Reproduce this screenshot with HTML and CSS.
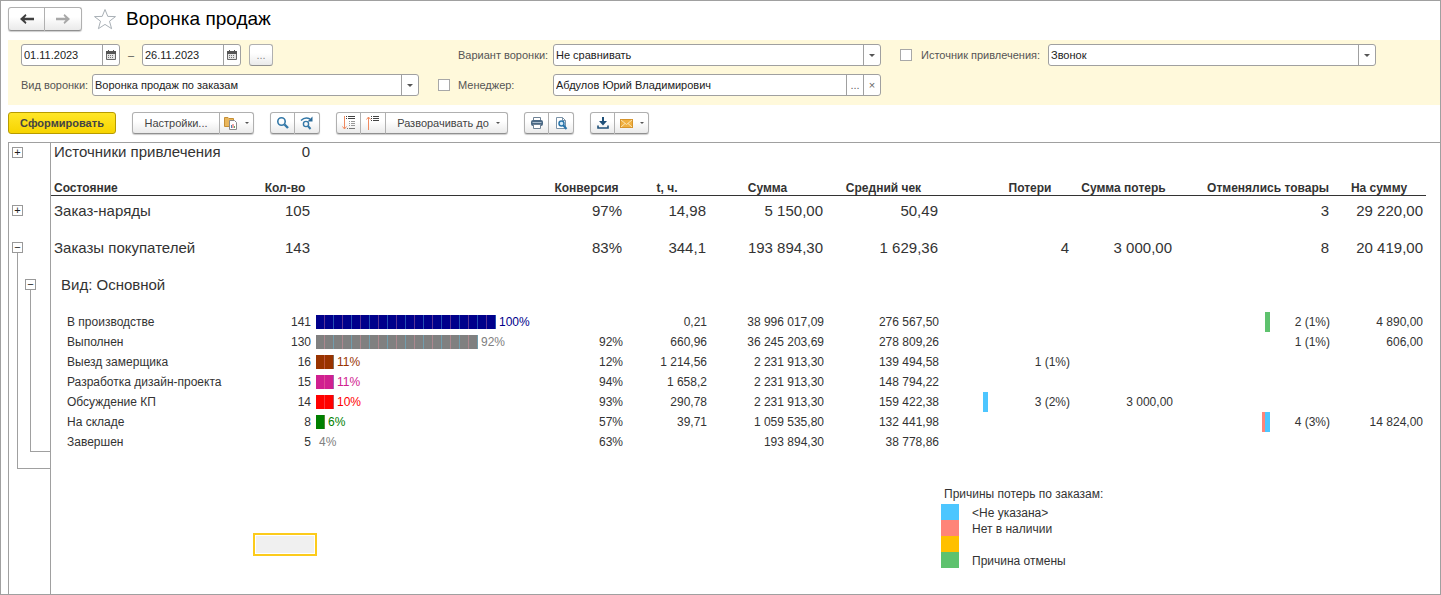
FILE: index.html
```html
<!DOCTYPE html>
<html lang="ru">

<head>
  <meta charset="UTF-8" />
  <meta name="viewport" content="width=device-width, initial-scale=1.0" />
  <title>Воронка продаж</title>
  <link rel="stylesheet" href="styles.css">
</head>

<body>
  <header class="header">
    <div class="btn-group nav">
      <button class="btn" aria-label="Назад">
        <svg width="16" height="12" viewBox="0 0 16 12"><path d="M1 6 6.500 1 7.500 2.500 5.500 4.700H15V7.300H5.500L7.500 9.500 6.500 11Z" fill="#404040"/></svg>
      </button>
      <button class="btn" aria-label="Вперед">
        <svg width="16" height="12" viewBox="0 0 16 12"><path d="M15 6 9.500 1 8.500 2.500 10.500 4.700H1V7.300H10.500L8.500 9.500 9.500 11Z" fill="#a8a8a8"/></svg>
      </button>
    </div>
    <button class="star" aria-label="Добавить в избранное">
      <svg width="24" height="22" viewBox="0 0 24 22"><path d="M12 1.500 14.800 8.400 22.500 8.600 16.500 13.200 18.600 20.700 12 16.400 5.400 20.700 7.500 13.200 1.500 8.600 9.200 8.400Z" fill="#fff" stroke="#a9b0b6"/></svg>
    </button>
    <h1 class="title">Воронка продаж</h1>
  </header>

  <form class="filters">
    <div class="filter-col">
      <div class="period">
        <div class="field date">
          <input type="text" value="01.11.2023" aria-label="Начало периода">
          <button type="button" class="field-btn" aria-label="Выбрать дату начала">
            <svg width="10" height="10" viewBox="0 0 10 10"><path d="M.5 1.500H9.500V9.500H.5Z" fill="#e4e4e4" stroke="#666"/><path d="M0 2.500H10" stroke="#555" stroke-width="3"/><path d="M2.500 0V2M7.500 0V2" stroke="#555"/><path d="M2 5.500H8M2 7.500H8" stroke="#777" stroke-dasharray="1 1"/></svg>
          </button>
        </div>
        <span class="dash">–</span>
        <div class="field date">
          <input type="text" value="26.11.2023" aria-label="Конец периода">
          <button type="button" class="field-btn" aria-label="Выбрать дату окончания">
            <svg width="10" height="10" viewBox="0 0 10 10"><path d="M.5 1.500H9.500V9.500H.5Z" fill="#e4e4e4" stroke="#666"/><path d="M0 2.500H10" stroke="#555" stroke-width="3"/><path d="M2.500 0V2M7.500 0V2" stroke="#555"/><path d="M2 5.500H8M2 7.500H8" stroke="#777" stroke-dasharray="1 1"/></svg>
          </button>
        </div>
        <button type="button" class="btn more" aria-label="Выбрать период">...</button>
      </div>
      <div class="kind">
        <label for="kind">Вид воронки:</label>
        <div class="field">
          <select id="kind"><option>Воронка продаж по заказам</option></select>
          <span class="field-btn"><i class="caret"></i></span>
        </div>
      </div>
    </div>

    <div class="filter-col">
      <div class="param">
        <label class="param-label" for="variant">Вариант воронки:</label>
        <div class="field">
          <select id="variant"><option>Не сравнивать</option></select>
          <span class="field-btn"><i class="caret"></i></span>
        </div>
      </div>
      <div class="param">
        <input type="checkbox" class="check" aria-label="Отбор по менеджеру">
        <label class="param-label" for="manager">Менеджер:</label>
        <div class="field">
          <input type="text" id="manager" value="Абдулов Юрий Владимирович">
          <button type="button" class="field-btn" aria-label="Выбрать менеджера">...</button>
          <button type="button" class="field-btn" aria-label="Очистить">×</button>
        </div>
      </div>
    </div>

    <div class="filter-col">
      <div class="param wide">
        <input type="checkbox" class="check" aria-label="Отбор по источнику">
        <label class="param-label" for="source">Источник привлечения:</label>
        <div class="field">
          <select id="source"><option>Звонок</option></select>
          <span class="field-btn"><i class="caret"></i></span>
        </div>
      </div>
    </div>
  </form>

  <div class="toolbar">
    <button class="btn primary">Сформировать</button>
    <div class="btn-group">
      <button class="btn settings">Настройки...</button>
      <button class="btn menu" aria-label="Варианты отчета">
        <svg width="14" height="14" viewBox="0 0 14 14"><path d="M.5 1.500H4L5 2.500H9.500V10.500H.5Z" fill="#e9b65c" stroke="#c58f35"/><path d="M5.500 4.500H10.500L12.500 6.500V13.500H5.500Z" fill="#fff" stroke="#8a8a8a"/><path d="M7.500 12V9" stroke="#4d86b5"/><path d="M9 12V8" stroke="#d9534f"/><path d="M10.500 12V10" stroke="#62a862"/></svg>
        <i class="caret"></i>
      </button>
    </div>
    <div class="btn-group">
      <button class="btn icon" aria-label="Найти">
        <svg width="14" height="14" viewBox="0 0 14 14" fill="none" stroke="#3579a8"><circle cx="5.500" cy="5.500" r="3.700" stroke-width="1.600"/><path d="M8.500 8.500 12 12" stroke-width="2.400"/></svg>
      </button>
      <button class="btn icon" aria-label="Найти следующее">
        <svg width="14" height="14" viewBox="0 0 14 14" fill="none" stroke="#3579a8"><circle cx="6" cy="8" r="2.600" stroke-width="1.400"/><path d="M8 10 10.500 13" stroke-width="2"/><path d="M1 4.500Q5 .500 10 3" stroke-width="1.600"/><path d="M12.500.5V5.500H7.500Z" fill="#2b6b99" stroke="none"/></svg>
      </button>
    </div>
    <div class="btn-group">
      <button class="btn icon" aria-label="Развернуть группы">
        <svg width="14" height="14" viewBox="0 0 14 14" fill="none"><path d="M2.500 0V13M.5 10.500 2.500 13 4.500 10.500" stroke="#f08a60"/><path d="M4 .5H5M6 .5H13M4 2.500H5M6 2.500H13" stroke="#444"/><path d="M7 5.500H8M9 5.500H13M7 7.500H8M9 7.500H13M7 9.500H8M9 9.500H13" stroke="#999"/><path d="M5 12.500H6M7 12.500H13" stroke="#777"/></svg>
      </button>
      <button class="btn icon" aria-label="Свернуть группы">
        <svg width="14" height="14" viewBox="0 0 14 14" fill="none"><path d="M2.500 14V1M.5 3.500 2.500 1 4.500 3.500" stroke="#f08a60"/><path d="M5 .5H6M7 .5H13M5 2.500H6M7 2.500H13M5 4.500H6M7 4.500H13" stroke="#444"/></svg>
      </button>
      <button class="btn expand">Разворачивать до <i class="caret"></i></button>
    </div>
    <div class="btn-group">
      <button class="btn icon" aria-label="Печать">
        <svg width="14" height="14" viewBox="0 0 14 14"><path d="M3.500 4.500V1.500H10.500V4.500" fill="#fff" stroke="#6f8295"/><rect x="1" y="4" width="12" height="6" rx="2" fill="#4a6884"/><path d="M2.500 6.500H11.500" stroke="#a9bccd"/><path d="M3.500 8.500H10.500V12.500H3.500Z" fill="#fff" stroke="#6f8295"/></svg>
      </button>
      <button class="btn icon" aria-label="Предварительный просмотр">
        <svg width="14" height="14" viewBox="0 0 14 14"><path d="M2.500 1.500H8.500L11.500 4.500V12.500H2.500Z" fill="#fff" stroke="#7b93a8"/><path d="M8.500 1.500V4.500H11.500" fill="none" stroke="#7b93a8"/><circle cx="7.500" cy="7.500" r="2.500" fill="#d9ecf8" stroke="#2a75aa" stroke-width="1.500"/><path d="M9.500 9.500 12.500 13" stroke="#2a75aa" stroke-width="2"/></svg>
      </button>
    </div>
    <div class="btn-group">
      <button class="btn icon" aria-label="Сохранить">
        <svg width="14" height="14" viewBox="0 0 14 14"><path d="M6 1H8V5H11L7 9.500 3 5H6Z" fill="#1f5079"/><path d="M2 9.500V12H12V9.500" fill="none" stroke="#1f5079" stroke-width="1.600"/></svg>
      </button>
      <button class="btn menu" aria-label="Отправить">
        <svg width="13" height="10" viewBox="0 0 13 10"><rect x=".5" y="1.500" width="12" height="8" fill="#f0b040" stroke="#d6942c"/><path d="M1 2 6.500 6.500 12 2M1 9 5 5.500M12 9 8 5.500" fill="none" stroke="#fbe3b0"/></svg>
        <i class="caret"></i>
      </button>
    </div>
  </div>

  <main class="sheet">
    <!-- Row grouping tree -->
    <div class="gutter">
      <button class="toggle first" aria-label="Развернуть">+</button>
      <button class="toggle second" aria-label="Развернуть">+</button>
      <button class="toggle third" aria-label="Свернуть">−</button>
      <div class="branch outer">
        <button class="toggle nested" aria-label="Свернуть">−</button>
        <div class="branch inner"></div>
      </div>
    </div>

    <div class="report">
      <table class="funnel">
        <colgroup>
          <col>
          <col class="c-qty">
          <col class="c-bar">
          <col class="c-conv">
          <col class="c-time">
          <col class="c-sum">
          <col class="c-avg">
          <col class="c-mark">
          <col class="c-lost">
          <col class="c-lost-sum">
          <col class="c-mark-wide">
          <col class="c-cancel">
          <col class="c-total">
        </colgroup>
        <thead>
          <tr class="sources">
            <td>Источники привлечения</td>
            <td>0</td>
            <td colspan="11"></td>
          </tr>
          <tr class="heads">
            <th class="left">Состояние</th>
            <th>Кол-во</th>
            <th></th>
            <th>Конверсия</th>
            <th>t, ч.</th>
            <th>Сумма</th>
            <th>Средний чек</th>
            <th></th>
            <th>Потери</th>
            <th>Сумма потерь</th>
            <th colspan="2" class="right">Отменялись товары</th>
            <th>На сумму</th>
          </tr>
        </thead>
        <tbody>
          <tr class="total">
            <td>Заказ-наряды</td><td>105</td><td></td><td>97%</td><td>14,98</td><td>5 150,00</td><td>50,49</td>
            <td></td><td></td><td></td><td></td><td>3</td><td>29 220,00</td>
          </tr>
          <tr class="total">
            <td>Заказы покупателей</td><td>143</td><td></td><td>83%</td><td>344,1</td><td>193 894,30</td><td>1 629,36</td>
            <td></td><td>4</td><td>3 000,00</td><td></td><td>8</td><td>20 419,00</td>
          </tr>
          <tr class="total kind-row">
            <td colspan="13">Вид: Основной</td>
          </tr>
          <tr>
            <td>В производстве</td><td>141</td>
            <td class="bar-cell navy"><div class="bar" style="width: 180px"></div>100%</td>
            <td></td><td>0,21</td><td>38 996 017,09</td><td>276 567,50</td>
            <td></td><td></td><td></td>
            <td class="marks"><div><i class="green-bg"></i></div></td><td>2 (1%)</td><td>4 890,00</td>
          </tr>
          <tr>
            <td>Выполнен</td><td>130</td>
            <td class="bar-cell gray"><div class="bar" style="width: 162px"></div>92%</td>
            <td>92%</td><td>660,96</td><td>36 245 203,69</td><td>278 809,26</td>
            <td></td><td></td><td></td><td></td><td>1 (1%)</td><td>606,00</td>
          </tr>
          <tr>
            <td>Выезд замерщика</td><td>16</td>
            <td class="bar-cell brown"><div class="bar" style="width: 18px"></div>11%</td>
            <td>12%</td><td>1 214,56</td><td>2 231 913,30</td><td>139 494,58</td>
            <td></td><td>1 (1%)</td><td></td><td></td><td></td><td></td>
          </tr>
          <tr>
            <td>Разработка дизайн-проекта</td><td>15</td>
            <td class="bar-cell violet"><div class="bar" style="width: 18px"></div>11%</td>
            <td>94%</td><td>1 658,2</td><td>2 231 913,30</td><td>148 794,22</td>
            <td></td><td></td><td></td><td></td><td></td><td></td>
          </tr>
          <tr>
            <td>Обсуждение КП</td><td>14</td>
            <td class="bar-cell red"><div class="bar" style="width: 18px"></div>10%</td>
            <td>93%</td><td>290,78</td><td>2 231 913,30</td><td>159 422,38</td>
            <td class="marks"><div><i class="blue-bg"></i></div></td><td>3 (2%)</td><td>3 000,00</td>
            <td></td><td></td><td></td>
          </tr>
          <tr>
            <td>На складе</td><td>8</td>
            <td class="bar-cell green"><div class="bar" style="width: 9px"></div>6%</td>
            <td>57%</td><td>39,71</td><td>1 059 535,80</td><td>132 441,98</td>
            <td></td><td></td><td></td>
            <td class="marks"><div><i class="pink-bg narrow"></i><i class="blue-bg"></i></div></td><td>4 (3%)</td><td>14 824,00</td>
          </tr>
          <tr>
            <td>Завершен</td><td>5</td>
            <td class="bar-cell gray"><div class="bar" style="width: 0"></div>4%</td>
            <td>63%</td><td></td><td>193 894,30</td><td>38 778,86</td>
            <td></td><td></td><td></td><td></td><td></td><td></td>
          </tr>
        </tbody>
      </table>

      <div class="below">
        <div class="active-cell"></div>
        <section class="legend">
          <h2>Причины потерь по заказам:</h2>
          <ul>
            <li><i class="blue-bg"></i>&lt;Не указана&gt;</li>
            <li><i class="pink-bg"></i>Нет в наличии</li>
            <li><i class="amber-bg"></i></li>
            <li><i class="green-bg"></i>Причина отмены</li>
          </ul>
        </section>
      </div>
    </div>
  </main>
</body>

</html>
```
FILE: styles.css
```css
* {
  box-sizing: border-box;
}

body {
  margin: 0;
  min-height: 100vh;
  display: flex;
  flex-direction: column;
  padding-left: 7px;
  border: 1px solid #a0a0a0;
  font-family: "Liberation Sans", Arial, sans-serif;
  font-size: 11px;
  color: #333;
  background: #fff;
}

button,
input,
select {
  font: inherit;
  color: inherit;
}

svg {
  display: block;
}

/* Buttons */
.btn {
  display: flex;
  align-items: center;
  justify-content: center;
  height: 22px;
  padding: 0;
  border: 1px solid #b0b0b0;
  border-bottom-color: #909090;
  border-radius: 3px;
  background: linear-gradient(#fff 40%, #eaeaea);
  color: #444;
}

.btn-group {
  display: flex;
  border-radius: 3px;
  box-shadow: 0 1px 1px #ccc;
}

.btn-group .btn + .btn {
  border-left: 0;
  border-top-left-radius: 0;
  border-bottom-left-radius: 0;
}

.btn-group .btn:not(:last-child) {
  border-top-right-radius: 0;
  border-bottom-right-radius: 0;
}

.caret {
  border: 3px solid transparent;
  border-top-color: #555;
  border-bottom: 0;
}

.btn .caret {
  border-width: 2px;
  border-bottom: 0;
}

/* Header */
.header {
  display: flex;
  align-items: center;
  height: 39px;
  padding-bottom: 4px;
}

.nav .btn {
  width: 37px;
  height: 24px;
}

.star {
  margin: 0 9px 0 11px;
  padding: 0;
  border: 0;
  background: none;
}

.title {
  margin: 0;
  font-size: 19px;
  font-weight: normal;
  color: #000;
}

/* Filters */
.filters {
  display: grid;
  grid-template-columns: 398fr 443fr 476fr;
  gap: 19px;
  padding: 4px 64px 9px 13px;
  background: #fff9db;
}

.filter-col {
  display: flex;
  flex-direction: column;
  gap: 8px;
}

.period,
.kind,
.param {
  display: flex;
  align-items: center;
  color: #555;
}

.kind label {
  width: 71px;
}

.param-label {
  width: 95px;
}

.wide .param-label {
  width: 127px;
}

.param > .param-label:first-child {
  margin-left: 20px;
}

.check {
  appearance: none;
  width: 12px;
  height: 12px;
  margin: 0 8px 0 0;
  border: 1px solid #a8a8a8;
  background: #fff;
}

.wide .check {
  margin-right: 9px;
}

.field {
  display: flex;
  flex: 1;
  min-width: 0;
  height: 22px;
  border: 1px solid #a0a0a0;
  border-radius: 3px;
  background: #fff;
  color: #222;
}

.field input,
.field select {
  appearance: none;
  flex: 1;
  min-width: 0;
  padding: 0 2px;
  border: 0;
  background: none;
}

.field-btn {
  display: flex;
  align-items: center;
  justify-content: center;
  width: 17px;
  padding: 0;
  border: 0;
  border-left: 1px solid #a0a0a0;
  background: none;
  color: #666;
}

.date {
  flex: 0 0 99px;
}

.dash {
  width: 22px;
  text-align: center;
}

.more {
  width: 24px;
  margin-left: 8px;
  color: #888;
}

/* Toolbar */
.toolbar {
  display: flex;
  gap: 16px;
  padding: 7px 0 8px;
}

.primary {
  width: 108px;
  border-color: #b79b00;
  background: linear-gradient(#ffe629, #f7d400);
  font-weight: bold;
}

.settings {
  width: 88px;
}

.icon {
  width: 25px;
}

.menu {
  gap: 7px;
  width: 34px;
}

.expand {
  gap: 7px;
  width: 122px;
  padding-left: 4px;
}

/* Sheet */
.sheet {
  display: flex;
  flex: 1;
  border-top: 1px solid #a0a0a0;
  border-left: 1px solid #a0a0a0;
}

.gutter {
  width: 42px;
  border-right: 1px solid #a0a0a0;
}

.toggle {
  display: flex;
  align-items: center;
  justify-content: center;
  width: 11px;
  height: 11px;
  margin-left: 3px;
  padding: 0;
  border: 1px solid #999;
  background: #fff;
  line-height: 9px;
  color: #222;
}

.first {
  margin-top: 4px;
}

.second {
  margin-top: 47px;
}

.third {
  margin-top: 26px;
}

.branch {
  border: solid #a0a0a0;
  border-width: 0 0 1px 1px;
}

.outer {
  height: 216px;
  margin-left: 8px;
  padding-top: 26px;
}

.nested {
  margin-left: 7px;
}

.inner {
  height: 162px;
  margin-left: 12px;
}

.report {
  flex: 1;
  padding-right: 14px;
}

.funnel {
  width: 100%;
  table-layout: fixed;
  border-collapse: separate;
  border-spacing: 0;
  font-size: 12px;
}

.c-qty { width: 64px; }
.c-bar { width: 231px; }
.c-conv { width: 77px; }
.c-time { width: 84px; }
.c-sum { width: 117px; }
.c-avg { width: 115px; }
.c-mark { width: 47px; }
.c-lost { width: 84px; }
.c-lost-sum { width: 103px; }
.c-mark-wide { width: 95px; }
.c-cancel { width: 62px; }
.c-total { width: 94px; }

.funnel td {
  height: 20px;
  padding: 0 2px;
  text-align: right;
  white-space: nowrap;
}

.funnel td:nth-child(2) {
  padding-right: 6px;
}

.funnel td:last-child {
  padding-right: 3px;
}

.funnel td:first-child {
  padding-left: 16px;
  text-align: left;
}

.funnel .sources td,
.funnel .total td {
  font-size: 15px;
  line-height: 18px;
  vertical-align: top;
}

.funnel .total td {
  height: 37px;
  padding-top: 6px;
  padding-right: 3px;
}

.funnel .total td:nth-child(2),
.funnel .sources td:nth-child(2) {
  padding-right: 7px;
}

.funnel .sources td:first-child,
.funnel .total td:first-child {
  padding-left: 3px;
}

.funnel .kind-row td:first-child {
  height: 42px;
  padding-left: 10px;
}

.heads th {
  height: 33px;
  padding: 0;
  border-bottom: 1px solid #333;
  line-height: 14px;
  vertical-align: bottom;
  white-space: nowrap;
}

.heads .left {
  padding-left: 3px;
  text-align: left;
}

.heads .right {
  padding-right: 3px;
  text-align: right;
}

/* Funnel bars are made of 9px blocks */
.funnel .bar-cell {
  padding: 0;
  text-align: left;
}

.bar {
  display: inline-block;
  height: 14px;
  margin: 0 3px 0 -1px;
  background:
    repeating-linear-gradient(90deg, transparent 0 8px, rgba(255, 150, 170, .35) 8px 9px, transparent 9px 17px, rgba(90, 200, 240, .4) 17px 18px),
    currentColor;
  vertical-align: middle;
}

.navy { color: #00008b; }
.gray { color: #808080; }
.brown { color: #993300; }
.violet { color: #d02090; }
.red { color: #ff0000; }
.green { color: #008000; }

.funnel .marks {
  padding: 0;
}

.marks div {
  display: flex;
  justify-content: flex-end;
  height: 20px;
}

.marks i {
  width: 5px;
}

.marks .narrow {
  width: 3px;
}

.blue-bg { background: #4dc6ff; }
.pink-bg { background: #ff8478; }
.amber-bg { background: #ffc000; }
.green-bg { background: #5ec26e; }

/* Legend and cursor under the table */
.below {
  display: grid;
  grid-template-columns: 1fr 64px 624px 485px;
  padding-top: 34px;
  font-size: 12px;
}

.active-cell {
  grid-column: 2;
  height: 23px;
  margin-top: 47px;
  padding: 1px;
  border: 2px solid #fccb1c;
  background: #f0f0f0 content-box;
}

.legend {
  grid-column: 4;
}

.legend h2 {
  margin: 0;
  padding: 0 0 2px 3px;
  font-size: 12px;
  font-weight: normal;
  line-height: 16px;
}

.legend ul {
  margin: 0;
  padding: 0;
  list-style: none;
}

.legend li {
  display: flex;
  gap: 13px;
  height: 16px;
  line-height: 18px;
}

.legend i {
  width: 18px;
}
```
